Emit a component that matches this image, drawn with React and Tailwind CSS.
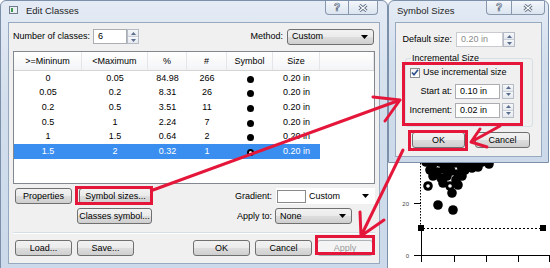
import React from 'react';

const BTN =
  'flex items-center justify-center h-[16px] border border-[#707070] rounded-[3px] bg-[linear-gradient(#f2f2f2_0%,#ebebeb_48%,#dddddd_52%,#cfcfcf_100%)]';
const COMBO =
  'flex items-center justify-between h-[16px] pl-[4px] pr-[5px] border border-[#707070] rounded-[3px] bg-[linear-gradient(#f2f2f2_0%,#ebebeb_48%,#dddddd_52%,#cfcfcf_100%)]';
const FRAME =
  'flex flex-col border border-[#7d90aa] rounded-t-[6px] bg-[linear-gradient(#e4ebf5,#d2deec_40%,#cbd9ea)]';

const rows = [
  ['0', '0.05', '84.98', '266'],
  ['0.05', '0.2', '8.31', '26'],
  ['0.2', '0.5', '3.51', '11'],
  ['0.5', '1', '2.24', '7'],
  ['1', '1.5', '0.64', '2'],
  ['1.5', '2', '0.32', '1'],
];

function Button({ className = '', children }) {
  return <div className={`${BTN} ${className}`}>{children}</div>;
}

function Caret() {
  return (
    <svg width="7" height="4" viewBox="0 0 7 4">
      <path d="M0 0h7L3.5 4z" fill="#000" />
    </svg>
  );
}

function Combo({ className = '', children }) {
  return (
    <div className={`${COMBO} ${className}`}>
      <span>{children}</span>
      <Caret />
    </div>
  );
}

function Spinner() {
  return (
    <div className="flex flex-col w-[12px] h-[15px] border border-[#b5bcc6]">
      <div className="flex-1 flex items-center justify-center bg-[linear-gradient(#f7f8fa,#e4e8ee)] border-b border-[#c9cfd8]">
        <svg width="5" height="3" viewBox="0 0 5 3">
          <path d="M0 3L2.5 0L5 3z" fill="#5a6d8c" />
        </svg>
      </div>
      <div className="flex-1 flex items-center justify-center bg-[linear-gradient(#f7f8fa,#e4e8ee)]">
        <svg width="5" height="3" viewBox="0 0 5 3">
          <path d="M0 0L2.5 3L5 0z" fill="#5a6d8c" />
        </svg>
      </div>
    </div>
  );
}

function TextBox({ className = '', children }) {
  return (
    <div className={`h-[15px] bg-white border border-[#abadb3] flex items-center pl-[4px] ${className}`}>
      {children}
    </div>
  );
}

function CaptionButtons({ q, x }) {
  return (
    <div className="flex self-start">
      <div className={`${q} h-[14px] flex items-center justify-center border border-t-0 border-[#8797ad] rounded-bl-[4px] bg-[linear-gradient(#f4f7fb,#dbe4ef)]`}>
        <span className="text-[10px] font-bold leading-none text-white [-webkit-text-stroke:0.7px_#56677f]">?</span>
      </div>
      <div className={`${x} h-[14px] flex items-center justify-center border border-t-0 border-l-0 border-[#8797ad] rounded-br-[4px] bg-[linear-gradient(#f4f7fb,#dbe4ef)]`}>
        <svg width="10" height="8" viewBox="0 0 10 8">
          <path d="M1.5 1L8.5 7M8.5 1L1.5 7" stroke="#56677f" strokeWidth="3" />
          <path d="M1.5 1L8.5 7M8.5 1L1.5 7" stroke="#fff" strokeWidth="1.3" />
        </svg>
      </div>
    </div>
  );
}

function EditClasses() {
  return (
    <div className={`${FRAME} w-[388px] h-[272px] shrink-0 px-[7px]`}>
      {/* Title bar */}
      <div className="h-[21px] flex items-center">
        <svg width="9" height="8" viewBox="0 0 9 8" className="ml-[1px] mt-[-3px]">
          <rect x="0.5" y="0.5" width="8" height="7" fill="#e9eef3" stroke="#6d7b8b" />
          <rect x="2" y="2" width="2" height="4" fill="#3f9a4f" />
        </svg>
        <span className="ml-[8px] mt-[-2px] text-[9.5px] text-[#1e1e1e]">Edit Classes</span>
        <div className="ml-auto mr-[2px] self-start">
          <CaptionButtons q="w-[24px]" x="w-[29px]" />
        </div>
      </div>

      {/* Client */}
      <div className="h-[242px] bg-[#f0f0f0] border border-[#97a9bf] px-[4px] flex flex-col">
        <div className="mt-[5px] h-[17px] flex items-center">
          <span>Number of classes:</span>
          <div className="ml-[3px] flex">
            <TextBox className="w-[34px]">6</TextBox>
            <Spinner />
          </div>
          <span className="ml-auto mr-[4px]">Method:</span>
          <Combo className="w-[87px] mr-[1px]">Custom</Combo>
        </div>

        {/* List */}
        <div className="mt-[6px] h-[133px] bg-white border border-[#828790]">
          <div className="grid grid-cols-[68px_66px_39px_40px_46px_47px_1fr] h-[19px] bg-[linear-gradient(#ffffff,#f3f4f6)] border-b border-[#d5d5d5]">
            {['>=Mininum', '<Maximum', '%', '#', 'Symbol', 'Size', ''].map((h, i) => (
              <div key={i} className="flex items-center justify-center border-r border-[#e3e5e8]">
                {h}
              </div>
            ))}
          </div>
          {rows.map((r, i) => {
            const sel = i === rows.length - 1;
            const cell = sel
              ? 'flex items-center justify-center bg-[#3a8ef0] text-white'
              : 'flex items-center justify-center';
            return (
              <div key={i} className="grid grid-cols-[68px_66px_39px_40px_46px_47px_1fr] h-[14.6px]">
                {r.map((v, j) => (
                  <div key={j} className={cell}>{v}</div>
                ))}
                <div className={cell}>
                  {sel ? (
                    <div className="w-[7px] h-[7px] mt-[2px] rounded-full border-[2px] border-black bg-white" />
                  ) : (
                    <div className="w-[7px] h-[7px] mt-[2px] rounded-full bg-black" />
                  )}
                </div>
                <div className={cell}>0.20 in</div>
                <div />
              </div>
            );
          })}
        </div>

        {/* Options */}
        <div className="mt-[4px] h-[16px] flex items-center">
          <Button className="w-[57px] ml-[2px]">Properties</Button>
          <Button className="w-[73px] ml-[7px]">Symbol sizes...</Button>
          <span className="ml-auto mr-[4px]">Gradient:</span>
          <div className="w-[99px] h-[16px] flex items-center bg-white pl-[1px] pr-[6px]">
            <div className="w-[29px] h-[13px] bg-white border border-[#8a8a8a]" />
            <span className="ml-[3px] flex-1">Custom</span>
            <Caret />
          </div>
        </div>
        <div className="mt-[4px] h-[16px] flex items-center">
          <Button className="w-[75px] ml-[64px]">Classes symbol...</Button>
          <span className="ml-auto mr-[3px]">Apply to:</span>
          <Combo className="w-[77px] mr-[23px]">None</Combo>
        </div>

        <div className="mt-[8px] h-[2px] border-t border-[#d5dfe5] border-b border-b-white" />

        <div className="mt-[6px] h-[16px] flex items-center">
          <Button className="w-[57px] ml-[2px]">Load...</Button>
          <Button className="w-[57px] ml-[5px]">Save...</Button>
          <Button className="w-[57px] ml-[59px]">OK</Button>
          <Button className="w-[57px] ml-[5px]">Cancel</Button>
          <div className="w-[56px] ml-[5px] h-[16px] flex items-center justify-center border border-[#adb2b5] rounded-[3px] bg-[#f4f4f4] text-[#9a9a9a]">
            Apply
          </div>
        </div>
      </div>
    </div>
  );
}

function SymbolSizes() {
  return (
    <div className={`${FRAME} w-[161px] h-[163px] px-[6px] pb-[5px]`}>
      <div className="h-[21px] flex items-center">
        <span className="ml-[2px] mt-[-2px] text-[9.5px] text-[#1e1e1e]">Symbol Sizes</span>
        <div className="ml-auto mr-[-3px] self-start">
          <CaptionButtons q="w-[26px]" x="w-[33px]" />
        </div>
      </div>
      <div className="flex-1 bg-[#f0f0f0] border border-[#97a9bf] flex flex-col">
        <div className="mt-[9px] h-[15px] flex items-center">
          <span className="w-[56px] text-right">Default size:</span>
          <div className="ml-[4px] flex">
            <TextBox className="w-[47px] text-[#8a8a8a] border-[#c9cbd0]">0.20 in</TextBox>
            <Spinner />
          </div>
        </div>

        <fieldset className="ml-[9px] mt-[6px] w-[128px] h-[74px] border border-[#d5dfe5] rounded-[3px]">
          <legend className="ml-[5px] px-[1px] leading-[11px]">Incremental Size</legend>
          <div className="mt-[3px] ml-[4px] h-[11px] flex items-center">
            <div className="w-[10px] h-[10px] border border-[#8f8f8f] bg-[linear-gradient(#f0f0f0,#ffffff)] flex items-center justify-center">
              <svg width="8" height="7" viewBox="0 0 8 7">
                <path d="M1 3.5L3 5.7L7 0.8" stroke="#2c4f8a" strokeWidth="1.6" fill="none" />
              </svg>
            </div>
            <span className="ml-[3px]">Use incremental size</span>
          </div>
          <div className="mt-[6px] h-[14px] flex items-center">
            <span className="w-[46px] text-right">Start at:</span>
            <div className="ml-[3px] flex">
              <TextBox className="w-[45px]">0.10 in</TextBox>
              <div className="ml-[2px]"><Spinner /></div>
            </div>
          </div>
          <div className="mt-[5px] h-[14px] flex items-center">
            <span className="w-[46px] text-right">Increment:</span>
            <div className="ml-[3px] flex">
              <TextBox className="w-[45px]">0.02 in</TextBox>
              <div className="ml-[2px]"><Spinner /></div>
            </div>
          </div>
        </fieldset>

        <div className="mt-[5px] flex">
          <Button className="w-[53px] ml-[16px]">OK</Button>
          <Button className="w-[55px] ml-[10px]">Cancel</Button>
        </div>
      </div>
    </div>
  );
}

// scatter points of the plot peeking out under the dialog
const blobs = [
  [426, 162], [433, 164], [440, 162], [447, 165], [454, 163], [461, 166], [468, 163], [475, 165], [482, 162], [489, 164],
  [430, 170], [437, 172], [444, 169], [451, 171], [458, 174], [465, 170], [472, 168], [478, 167],
  [433, 176], [441, 178], [447, 176], [456, 180], [462, 176],
  [443, 183], [458, 185], [452, 193], [438, 205], [453, 210],
];
const rings = [[428, 186], [450, 186]];

function Chart() {
  return (
    <svg width="162" height="105" viewBox="388 163 162 105" className="block">
      {blobs.map(([x, y], i) => (
        <circle key={i} cx={x} cy={y} r="4.8" fill="#000" />
      ))}
      {rings.map(([x, y], i) => (
        <g key={i}>
          <circle cx={x} cy={y} r="4.8" fill="#000" />
          <circle cx={x} cy={y} r="1.8" fill="#fff" />
        </g>
      ))}
      <line x1="420.5" y1="163" x2="420.5" y2="228" stroke="#000" strokeDasharray="1.5 1.5" />
      <line x1="421.5" y1="228" x2="421.5" y2="262" stroke="#000" />
      <line x1="421" y1="255.5" x2="550" y2="255.5" stroke="#000" />
      <line x1="423" y1="228.5" x2="543" y2="228.5" stroke="#000" strokeDasharray="2 2" />
      <rect x="418" y="225" width="6" height="6" fill="#000" />
      <rect x="540" y="225" width="6" height="6" fill="#000" />
      <line x1="414" y1="203.5" x2="421" y2="203.5" stroke="#000" />
      <line x1="414" y1="255.5" x2="421" y2="255.5" stroke="#000" />
      {[454, 486, 518, 549].map((x) => (
        <line key={x} x1={x + 0.5} y1="255" x2={x + 0.5} y2="262" stroke="#000" />
      ))}
      <text x="409" y="206" fontSize="6" fill="#444" textAnchor="end" fontFamily="Liberation Sans, sans-serif">20</text>
      <text x="409" y="258" fontSize="6" fill="#444" textAnchor="end" fontFamily="Liberation Sans, sans-serif">0</text>
    </svg>
  );
}

function Annotations() {
  const red = '#e4173b';
  return (
    <svg width="550" height="268" className="absolute inset-0 pointer-events-none">
      <g fill="none" stroke={red} strokeWidth="3" strokeLinecap="round" strokeLinejoin="round">
        <rect x="76.5" y="187.5" width="75" height="16" strokeLinecap="butt" strokeLinejoin="miter" />
        <rect x="316.5" y="236.5" width="57" height="17" strokeLinecap="butt" strokeLinejoin="miter" />
        <rect x="403.5" y="63.5" width="118" height="61" strokeLinecap="butt" strokeLinejoin="miter" />
        <rect x="409.5" y="131.5" width="57" height="18" strokeLinecap="butt" strokeLinejoin="miter" />
        {/* arrow to Symbol Sizes */}
        <path d="M153 190L400 100M400 100L373 97M400 100L385 121" />
        {/* arrow to Apply */}
        <path d="M403 150L361 236M361 236L360 212M361 236L384 220" />
        {/* arrow to OK */}
        <path d="M500 126L471 142M471 142L487 147M471 142L480 129" />
      </g>
    </svg>
  );
}

export default function App() {
  return (
    <div className="relative w-[550px] h-[268px] overflow-hidden bg-white flex text-[9px] leading-none text-black font-['Liberation_Sans',Arial,sans-serif]">
      <EditClasses />
      <div className="w-[162px] flex flex-col">
        <SymbolSizes />
        <Chart />
      </div>
      <Annotations />
    </div>
  );
}
